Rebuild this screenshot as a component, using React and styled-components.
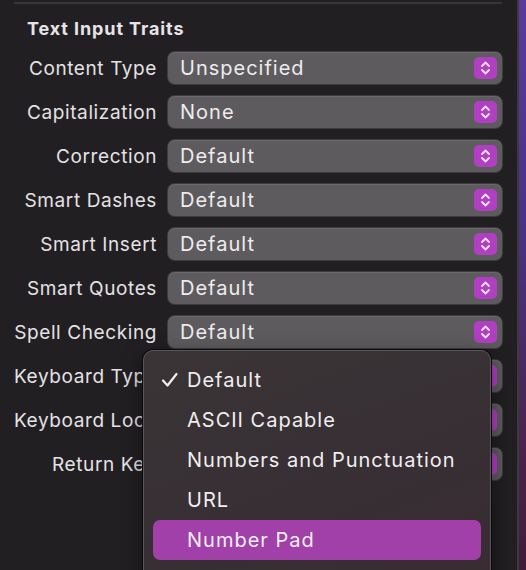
import React from "react";
import styled, { createGlobalStyle } from "styled-components";

const GlobalStyle = createGlobalStyle`
  html, body {
    margin: 0;
    padding: 0;
    background: #221f22;
  }
  body {
    font-family: "Inter", "Liberation Sans", sans-serif;
    -webkit-font-smoothing: antialiased;
  }
`;

const Window = styled.div`
  display: flex;
  width: 526px;
  height: 570px;
  overflow: hidden;
`;

const Panel = styled.div`
  position: relative;
  flex: 1;
  background: #221f22;
  padding: 2px 15px 0 14px;
`;

const Desktop = styled.div`
  width: 7px;
  border-left: 2px solid #3d3a3d;
  background: linear-gradient(180deg, #5b3a9c 0%, #4a3184 40%, #48264e 75%, #3e1d3a 100%);
`;

const Divider = styled.div`
  height: 2px;
  background: #383538;
`;

const SectionTitle = styled.div`
  margin: 14px 0 0 13px;
  font-size: 18px;
  letter-spacing: 0.9px;
  font-weight: 700;
  color: #e6e4e6;
  line-height: 22px;
`;

const Rows = styled.div`
  display: grid;
  grid-template-columns: 143px 1fr;
  column-gap: 11px;
  row-gap: 12px;
  margin-top: 12px;
  align-items: center;
`;

const Label = styled.div`
  font-size: 19px;
  letter-spacing: 0.6px;
  color: #e4e2e4;
  white-space: nowrap;
  overflow: hidden;
  text-align: ${p => (p.$indent === undefined ? "right" : "left")};
  padding-left: ${p => p.$indent || 0}px;
`;

const Popup = styled.div`
  display: flex;
  align-items: center;
  height: 32px;
  box-sizing: border-box;
  border-radius: 7px;
  background: #5d5b5d;
  box-shadow: 0 0 0 1px #3e3c3e, inset 0 1px 0 #6a686a;
  padding: 0 5px 0 12px;
  color: #eeeced;
  font-size: 20px;
  letter-spacing: 1px;
`;

const PopupText = styled.span`
  flex: 1;
`;

const Stepper = styled.span`
  display: flex;
  align-items: center;
  justify-content: center;
  width: 23px;
  height: 22px;
  border-radius: 5px;
  background: #b13fc2;
`;

const Menu = styled.div`
  position: absolute;
  left: 143px;
  top: 350px;
  width: 348px;
  height: 240px;
  box-sizing: border-box;
  padding: 9px 9px;
  border-radius: 10px;
  border: 1px solid #5a5558;
  background: linear-gradient(160deg, #3a3437 0%, #372f33 60%, #3a2c33 100%);
  box-shadow: 0 0 0 1px #0c0b0c, 0 6px 20px rgba(0, 0, 0, 0.5);
`;

const MenuItem = styled.div`
  position: relative;
  display: flex;
  align-items: center;
  height: 40px;
  padding-left: 34px;
  border-radius: 7px;
  font-size: 20px;
  letter-spacing: 1px;
  color: #f0eef0;
  background: ${p => (p.$active ? "#a040a8" : "transparent")};
`;

const Check = styled.svg`
  position: absolute;
  left: 8px;
  top: 12px;
`;

const Chevrons = () => (
  <svg width="11" height="16" viewBox="0 0 11 16" fill="none">
    <path d="M2 6 L5.5 2.5 L9 6" stroke="#f3e6f5" strokeWidth="1.8" strokeLinecap="round" strokeLinejoin="round" />
    <path d="M2 10 L5.5 13.5 L9 10" stroke="#f3e6f5" strokeWidth="1.8" strokeLinecap="round" strokeLinejoin="round" />
  </svg>
);

const rows = [
  ["Content Type", "Unspecified"],
  ["Capitalization", "None"],
  ["Correction", "Default"],
  ["Smart Dashes", "Default"],
  ["Smart Insert", "Default"],
  ["Smart Quotes", "Default"],
  ["Spell Checking", "Default"],
];

// rows partly covered by the open menu
const covered = [
  ["Keyboard Type", 0],
  ["Keyboard Look", 0],
  ["Return Key", 38],
];

const menuItems = ["Default", "ASCII Capable", "Numbers and Punctuation", "URL", "Number Pad"];

export default function App() {
  return (
    <>
      <GlobalStyle />
      <Window>
        <Panel>
          <Divider />
          <SectionTitle>Text Input Traits</SectionTitle>
          <Rows>
            {rows.map(([label, value]) => (
              <React.Fragment key={label}>
                <Label>{label}</Label>
                <Popup>
                  <PopupText>{value}</PopupText>
                  <Stepper>
                    <Chevrons />
                  </Stepper>
                </Popup>
              </React.Fragment>
            ))}
            {covered.map(([label, indent]) => (
              <React.Fragment key={label}>
                <Label $indent={indent}>{label}</Label>
                <Popup>
                  <PopupText />
                  <Stepper>
                    <Chevrons />
                  </Stepper>
                </Popup>
              </React.Fragment>
            ))}
          </Rows>
          <Menu>
            {menuItems.map((item, i) => (
              <MenuItem key={item} $active={item === "Number Pad"}>
                {i === 0 && (
                  <Check width="18" height="16" viewBox="0 0 18 16" fill="none">
                    <path d="M2 8.5 L6.5 13.5 L15.5 2" stroke="#f0eef0" strokeWidth="2.2" strokeLinecap="round" strokeLinejoin="round" />
                  </Check>
                )}
                {item}
              </MenuItem>
            ))}
          </Menu>
        </Panel>
        <Desktop />
      </Window>
    </>
  );
}
